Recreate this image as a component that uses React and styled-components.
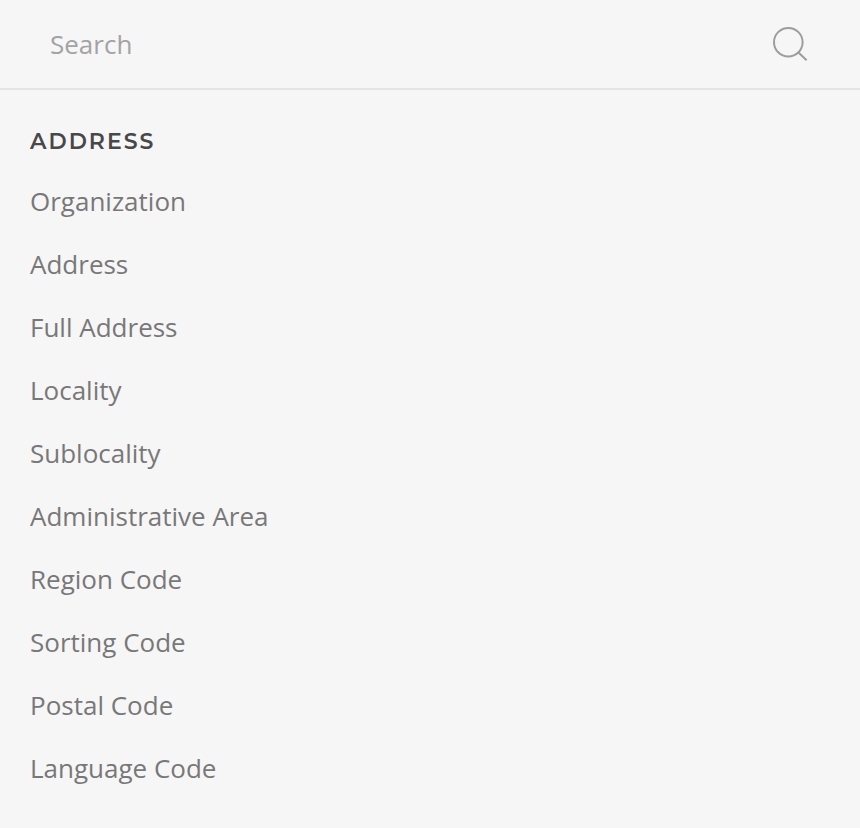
import React from 'react';
import styled, { createGlobalStyle } from 'styled-components';

const GlobalStyle = createGlobalStyle`
  *, *::before, *::after { box-sizing: border-box; }
  body { margin: 0; background: #f6f6f6; }
`;

const Panel = styled.main`
  display: flex;
  flex-direction: column;
  min-height: 828px;
  background: #f6f6f6;
  font-family: "Open Sans", sans-serif;
  -webkit-font-smoothing: antialiased;
`;

const SearchBar = styled.label`
  display: flex;
  align-items: center;
  height: 90px;
  padding: 0 52px 0 50px;
  border-bottom: 2px solid #e4e4e4;
`;

const SearchInput = styled.input`
  flex: 1;
  min-width: 0;
  height: 60px;
  padding: 0;
  border: 0;
  outline: 0;
  background: transparent;
  color: #777;
  font: 400 26px/36px "Open Sans", sans-serif;
  &::placeholder { color: #a3a3a3; opacity: 1; }
`;

const SearchIcon = styled.svg`
  flex: none;
  width: 36px;
  height: 36px;
  fill: none;
  stroke: #9d9d9d;
  stroke-width: 2;
`;

const Section = styled.section`
  padding: 34px 30px 0;
`;

const Heading = styled.h2`
  margin: 0;
  color: #484848;
  font: 600 22px/36px Montserrat, Inter, sans-serif;
  letter-spacing: 2px;
  text-transform: uppercase;
`;

const FieldList = styled.ul`
  margin: 10px 0 0;
  padding: 0;
  list-style: none;
`;

const Field = styled.li`
  height: 63px;
  color: #787878;
  font-size: 26px;
  line-height: 63px;
  white-space: nowrap;
`;

const fields = [
  'Organization', 'Address', 'Full Address', 'Locality', 'Sublocality',
  'Administrative Area', 'Region Code', 'Sorting Code', 'Postal Code', 'Language Code',
];

export default function App() {
  return (
    <>
      <GlobalStyle />
      <Panel>
        <SearchBar>
          <SearchInput placeholder="Search" aria-label="Search" />
          <SearchIcon viewBox="0 0 36 36" aria-hidden="true">
            <circle cx="16.3" cy="16.2" r="14.3" />
            <path d="M26.2 26.2 34.6 34.3" />
          </SearchIcon>
        </SearchBar>
        <Section>
          <Heading>Address</Heading>
          <FieldList>
            {fields.map((name) => <Field key={name}>{name}</Field>)}
          </FieldList>
        </Section>
      </Panel>
    </>
  );
}
